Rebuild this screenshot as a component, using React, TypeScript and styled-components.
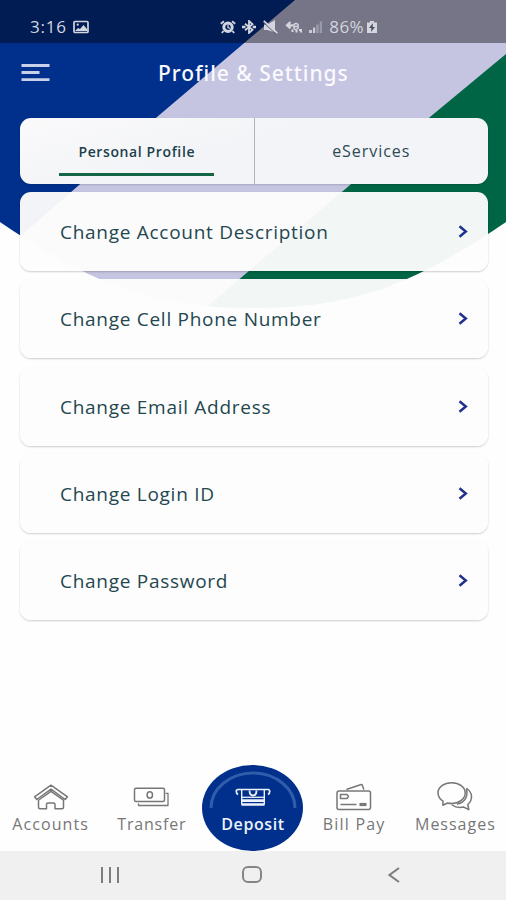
import React from "react";
import styled, { createGlobalStyle } from "styled-components";

const GlobalStyle = createGlobalStyle`
  body { margin: 0; background: #fefefe; }
  * { box-sizing: border-box; }
  button { border: 0; padding: 0; background: none; font: inherit; color: inherit; letter-spacing: inherit; }
  svg { display: block; flex: none; }
`;

const Screen = styled.div`
  position: relative;
  isolation: isolate;
  display: flex;
  flex-direction: column;
  width: 506px;
  height: 900px;
  overflow: hidden;
  background: #fefefe;
  color: #24474f;
  font-family: "Open Sans", "Noto Sans", sans-serif;
`;

const Backdrop = styled.svg`
  position: absolute;
  inset: 0;
  z-index: -1;
`;

const StatusBar = styled.div`
  display: flex;
  align-items: center;
  height: 43px;
  padding: 10px 129px 0 30px;
  background: rgba(0, 0, 0, 0.4);
  color: #d3d5df;
  font-size: 17px;
`;

const Clock = styled.span`
  width: 43px;
  letter-spacing: 0.8px;
`;

const StatusIcons = styled.div`
  display: flex;
  align-items: center;
  margin-left: auto;
`;

const Battery = styled.span`
  margin: 0 3px 0 6px;
  letter-spacing: 0.4px;
`;

const Header = styled.header`
  display: grid;
  grid-template-columns: 64px 1fr 64px;
  align-items: center;
  height: 60px;
  padding-left: 21px;
  color: #fafaff;
`;

const Title = styled.h1`
  margin: 0 0 0 73px;
  font-family: "Noto Sans", sans-serif;
  font-size: 21px;
  line-height: 28px;
  font-weight: 500;
  letter-spacing: 0.98px;
  white-space: nowrap;
`;

const Tabs = styled.div`
  display: flex;
  height: 66px;
  margin: 15px 18px 0 20px;
  border-radius: 11px;
  overflow: hidden;
  background: linear-gradient(165deg, #fafafb, #f3f4f7 45%);
  box-shadow: 0 1px 2px rgba(0, 0, 0, 0.15);
`;

const Tab = styled.button<{ $active?: boolean }>`
  display: flex;
  flex: 1;
  flex-direction: column;
  align-items: center;
  padding-top: 22px;
  color: ${(p) => (p.$active ? "#1c3f4b" : "#2c4a54")};
  font-size: ${(p) => (p.$active ? 14 : 16)}px;
  font-weight: ${(p) => (p.$active ? 600 : 400)};
  line-height: 23px;
  letter-spacing: ${(p) => (p.$active ? 0.62 : 0.95)}px;

  & + & { border-left: 1px solid #b0b2bd; }
`;

const Indicator = styled.span`
  width: 155px;
  height: 3px;
  margin-top: 10px;
  background: #126545;
`;

const List = styled.main`
  display: flex;
  flex: 1;
  flex-direction: column;
  gap: 8.3px;
  padding: 8px 18px 0 20px;
`;

const Card = styled.button`
  display: flex;
  flex: none;
  align-items: center;
  justify-content: space-between;
  height: 79px;
  padding: 1px 20px 0 40px;
  border-radius: 11px;
  background: rgba(253, 253, 253, 0.955);
  box-shadow: 0 1px 2px rgba(0, 0, 0, 0.2);
  font-size: 19px;
  letter-spacing: 0.72px;
`;

const BottomNav = styled.nav`
  display: grid;
  grid-template-columns: repeat(5, 1fr);
  height: 86px;
`;

const NavItem = styled.button<{ $spacing: number }>`
  display: flex;
  flex-direction: column;
  align-items: center;
  padding-top: 17px;
  color: #777;
  font-size: 16px;
  line-height: 22px;
  letter-spacing: ${(p) => p.$spacing}px;
  white-space: nowrap;

  svg { margin-bottom: 1px; }
`;

const DepositButton = styled(NavItem)`
  position: relative;
  justify-self: center;
  width: 101px;
  height: 86px;
  border-radius: 50%;
  background: #00308b;
  color: #eef2fb;
  font-weight: 600;
  padding-top: 19px;
  svg { margin-bottom: -1px; }
`;

const DepositArc = styled.svg`
  position: absolute;
  left: 0;
  top: 0;
`;

const SystemBar = styled.footer`
  display: grid;
  grid-template-columns: repeat(3, 142px);
  justify-content: center;
  place-items: center;
  height: 49px;
  padding: 0 2px 2px 0;
  background: #f0f0f0;
`;

const CARDS = [
  "Change Account Description",
  "Change Cell Phone Number",
  "Change Email Address",
  "Change Login ID",
  "Change Password",
];

const Chevron = () => (
  <svg width="10" height="14" viewBox="0 0 10 14" fill="none" stroke="#20318f" strokeWidth="2.5">
    <path d="M1.500 1.300 7.800 6.500l-6.300 5.200" />
  </svg>
);

const PictureIcon = () => (
  <svg width="16" height="14" viewBox="0 0 16 14">
    <rect x="1" y="1.5" width="14" height="11" rx="1" fill="none" stroke="currentColor" strokeWidth="1.7" />
    <path d="m2 11 3-3 2 1 3.5-4 3.5 4v2z" fill="currentColor" />
    <circle cx="4.7" cy="4.7" r="1.1" fill="currentColor" />
  </svg>
);

const AlarmIcon = () => (
  <svg width="16" height="14" viewBox="0 0 16 14" fill="none" stroke="currentColor">
    <circle cx="8" cy="7.2" r="4.2" strokeWidth="3" />
    <path d="M8 4.5v3l2 1" strokeWidth="1.3" />
    <path d="M.8 3.8 4 1.2m11.2 2.6L12 1.2M3.5 11l-1.7 2m10.7-2 1.7 2" strokeWidth="1.8" />
  </svg>
);

const BluetoothIcon = () => (
  <svg width="24" height="14" viewBox="-6 0 24 14" fill="none" stroke="currentColor" strokeWidth="1.8">
    <path d="m3 3.8 7.5 6L7 13V1l3.500 3.200L3 10.200" />
    <path d="M0 7h3.500M10.700 7h3.300" strokeWidth="2.600" />
  </svg>
);

const MutedIcon = () => (
  <svg width="20" height="14" viewBox="-3 0 20 14" fill="currentColor">
    <path d="M1 4.500h3.500L12 0v12.500L4.500 10H1z" />
    <path d="m.5 2.500 13 12" stroke="#50536c" strokeWidth="1" />
    <path d="m.8.800 13.500 12.400" stroke="currentColor" strokeWidth="1.800" />
  </svg>
);

const CallIcon = () => (
  <svg width="25" height="14" viewBox="-6 0 25 14" fill="none" stroke="currentColor">
    <path d="M4.500 2 1 5.300l3.500 3M1 5.300h6" strokeWidth="2.200" />
    <path d="M8 4.500q2-2 4 0v4q-3 2-4 0zm0 2h4" strokeWidth="1.500" />
    <path d="M6.500 9.500v2.500m4-2v2.500m2.500-2.500h2v2.500" strokeWidth="2" />
  </svg>
);

const SignalIcon = () => (
  <svg width="18" height="14" viewBox="-4 0 18 14" fill="currentColor">
    <path d="M0 10h3v3H0zm4-2.5h2.2V13H4z" opacity=".9" />
    <path d="M7.2 4.5h2.5V13H7.2zm3.5-3H13V13h-2.3z" opacity=".4" />
  </svg>
);

const BatteryIcon = () => (
  <svg width="10" height="14" viewBox="0 0 10 14">
    <path d="M3 1h4v1.4h3V13H0V2.4h3z" fill="currentColor" />
    <path d="M6 3 2 8h2.4L4 12l4-5H5.6z" fill="#4c4d5c" />
  </svg>
);

const MenuIcon = () => (
  <svg width="29" height="20" viewBox="0 0 29 20" stroke="#c9d1ea" strokeWidth="2.800">
    <path d="M.500 2.500h28m-28 7H18.500m-18 7.200h28" />
  </svg>
);

const line = {
  fill: "none",
  stroke: "currentColor",
  strokeWidth: 1.5,
  strokeLinejoin: "round" as const,
  strokeLinecap: "round" as const,
};

const HomeIcon = () => (
  <svg width="36" height="30" viewBox="0 0 36 30" {...line}>
    <path d="M18 3.200 1.500 14.800l2.300 2.700L18 7.200l14.200 10.300 2.300-2.700z" />
    <path d="M5.500 18.200v7q0 1.500 1.500 1.500h6.500v-4.200q0-1.500 1.500-1.500h5.500q1.500 0 1.500 1.500v4.200H29q1.500 0 1.500-1.500v-7L18 9.300 6.500 17.500" />
  </svg>
);

const CashIcon = () => (
  <svg width="37" height="30" viewBox="0 0 37 30" {...line}>
    <rect x="1.500" y="6.200" width="30" height="13.300" rx="1.500" />
    <ellipse cx="16.800" cy="12.900" rx="2.700" ry="3.200" />
    <path d="M33 11.300h2v12.200H5.500v-1.700" strokeWidth="1.300" />
  </svg>
);

const DepositIcon = () => (
  <svg width="36" height="30" viewBox="0 0 36 30" fill="none" stroke="currentColor">
    <path d="M3 10.500q-1.700-1-1.700-3Q1.300 5.500 3 5.500h30q1.700 0 1.700 2T33 10.500" strokeWidth="1.700" />
    <path d="M6.700 5.500v15m22.600-15v15" strokeWidth="1.400" />
    <path d="M14.500 6.500q0 5 3.500 5t3.500-5" strokeWidth="1.800" />
    <path d="M6.500 13.300h23" strokeWidth="1.300" />
    <path d="M6.500 16.600h23M6.500 20.500h23" strokeWidth="2.600" />
  </svg>
);

const BillIcon = () => (
  <svg width="36" height="30" viewBox="0 0 36 30" {...line}>
    <rect x="1" y="9" width="33.500" height="18.500" rx="2" />
    <path d="m11 7.200 13.500-4.500q1.400-.5 1.900.7L27.700 7" />
    <path d="M4.500 12.500h6.500l1.500 2-1.500 2H4.500z" />
    <path d="M5 22.500h15" strokeWidth="1.300" />
    <path d="M23.500 22.500h7" strokeWidth="3.200" strokeLinecap="butt" />
  </svg>
);

const MessagesIcon = () => (
  <svg width="37" height="30" viewBox="0 0 37 30" {...line}>
    <path d="M6 19.200C2.500 16.800 1 14 1 11 1 5.200 7 .8 14.600.8S28.200 5.200 28.200 11s-6 10.500-13.600 10.500c-1.600 0-2.600-.1-4-.5L5.800 23.300z" />
    <path d="M29.800 6.500c5.700 3.900 6.500 11.200 1 16l1 5.200-5-2.600c-4.800.9-8.800.1-11.600-2.100M29.500 7.500c1.800 6.500-1.500 12.800-9 14.500" />
  </svg>
);

export default function App() {
  return (
    <>
      <GlobalStyle />
      <Screen>
        <Backdrop width="506" height="320" viewBox="0 0 506 320">
          <defs>
            <clipPath id="bowl">
              <path d="M0 0h506v222C406 290 346 308 253 308S100 290 0 222z" />
            </clipPath>
          </defs>
          <g clipPath="url(#bowl)">
            <path d="M0 0h506v320H0z" fill="#c5c4e1" />
            <path d="M0 0h295L157 117 0 254z" fill="#00308b" />
            <path d="M506 54 430 117 190 321h316z" fill="#006545" />
          </g>
        </Backdrop>

        <StatusBar>
          <Clock>3:16</Clock>
          <PictureIcon />
          <StatusIcons>
            <AlarmIcon />
            <BluetoothIcon />
            <MutedIcon />
            <CallIcon />
            <SignalIcon />
            <Battery>86%</Battery>
            <BatteryIcon />
          </StatusIcons>
        </StatusBar>

        <Header>
          <MenuIcon />
          <Title>Profile &amp; Settings</Title>
        </Header>

        <Tabs>
          <Tab $active>
            Personal Profile
            <Indicator />
          </Tab>
          <Tab>eServices</Tab>
        </Tabs>

        <List>
          {CARDS.map((label) => (
            <Card key={label}>
              {label}
              <Chevron />
            </Card>
          ))}
        </List>

        <BottomNav>
          <NavItem $spacing={1.1}><HomeIcon />Accounts</NavItem>
          <NavItem $spacing={0.8}><CashIcon />Transfer</NavItem>
          <DepositButton $spacing={0.6}>
            <DepositArc width="102" height="86" viewBox="0 0 102 86">
              <path d="M9 43a42 35 0 0 1 84 0" fill="none" stroke="#2f5cab" strokeWidth="3" />
            </DepositArc>
            <DepositIcon />
            Deposit
          </DepositButton>
          <NavItem $spacing={1.2}><BillIcon />Bill Pay</NavItem>
          <NavItem $spacing={1}><MessagesIcon />Messages</NavItem>
        </BottomNav>

        <SystemBar>
          <svg width="20" height="16" viewBox="0 0 20 16" stroke="#7d7d7d" strokeWidth="2">
            <path d="M2 0v16m8-16v16m8-16v16" />
          </svg>
          <svg width="20" height="17" viewBox="0 0 20 17" fill="none" stroke="#858585" strokeWidth="2">
            <rect x="1" y="1" width="18" height="15" rx="5" />
          </svg>
          <svg width="12" height="16" viewBox="0 0 12 16" fill="none" stroke="#7d7d7d" strokeWidth="2">
            <path d="M11 1 1.500 8l9.500 7" />
          </svg>
        </SystemBar>
      </Screen>
    </>
  );
}
